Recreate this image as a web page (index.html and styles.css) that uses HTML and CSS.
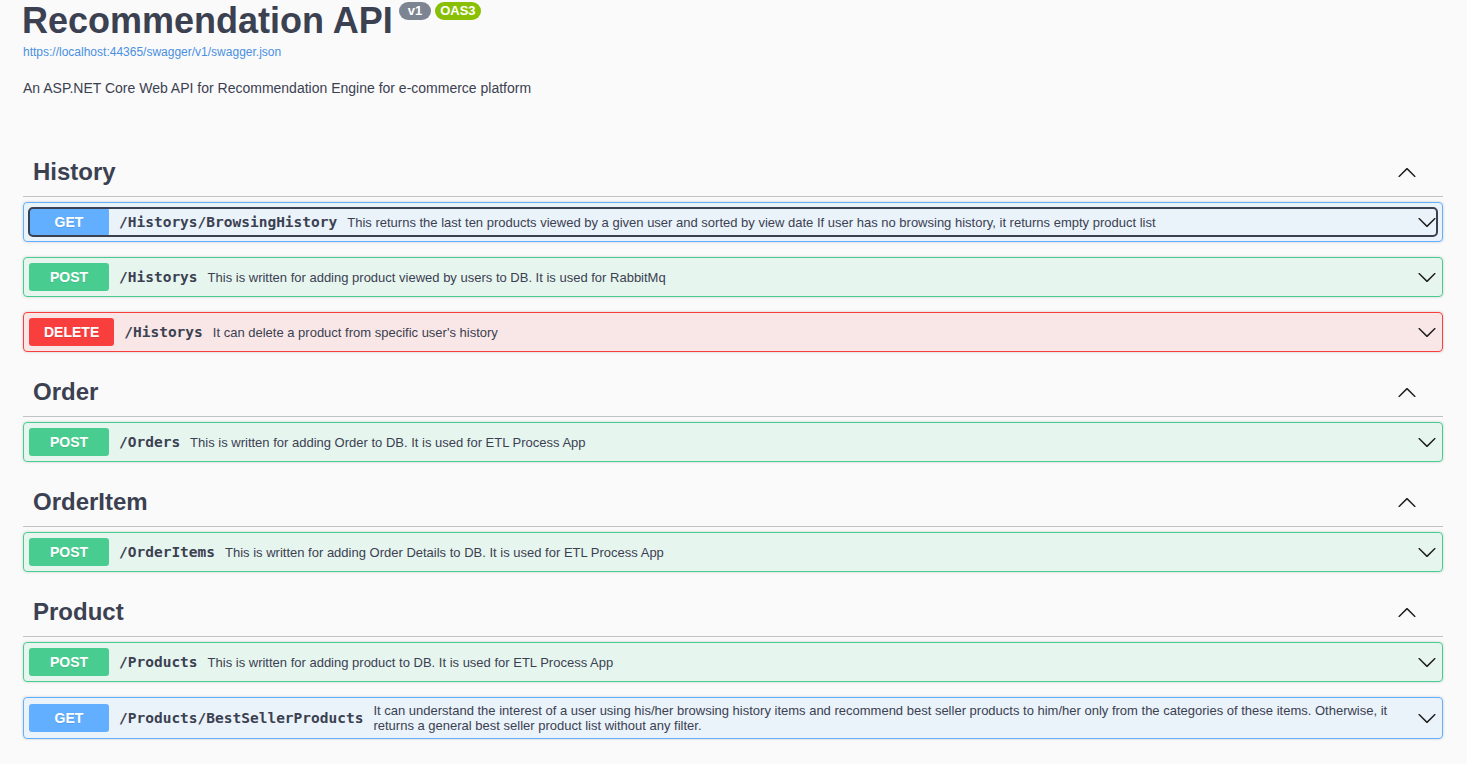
FILE: index.html
```html
<!DOCTYPE html>
<html lang="en">
<head>
<meta charset="utf-8">
<title>Swagger UI</title>
<link rel="stylesheet" href="styles.css">
</head>
<body>
<div class="wrapper">
  <div class="info">
    <h2 class="title">Recommendation API<span class="badge badge-version">v1</span><span class="badge badge-oas">OAS3</span></h2>
    <a class="spec-link" href="#">https://localhost:44365/swagger/v1/swagger.json</a>
    <p class="description">An ASP.NET Core Web API for Recommendation Engine for e-commerce platform</p>
  </div>

  <section class="tag-section">
    <h3 class="tag"><span class="tag-name">History</span><svg class="arrow" viewBox="0 0 20 20" width="20" height="20"><path d="M 17.418 14.908 C 17.69 15.176 18.127 15.176 18.397 14.908 C 18.667 14.64 18.668 14.207 18.397 13.939 L 10.489 6.109 C 10.219 5.841 9.782 5.841 9.51 6.109 L 1.602 13.939 C 1.332 14.207 1.332 14.64 1.602 14.908 C 1.873 15.176 2.311 15.176 2.581 14.908 L 10 7.767 L 17.418 14.908 Z"/></svg></h3>
    <div class="opblock opblock-get">
      <div class="summary">
        <div class="summary-inner focused">
          <span class="method">GET</span>
          <span class="path">/Historys/BrowsingHistory</span>
          <span class="desc">This returns the last ten products viewed by a given user and sorted by view date If user has no browsing history, it returns empty product list</span>
          <svg class="arrow op-arrow" viewBox="0 0 20 20" width="20" height="20"><path d="M 17.418 6.109 C 17.69 5.841 18.127 5.841 18.397 6.109 C 18.667 6.377 18.668 6.81 18.397 7.078 L 10.489 14.908 C 10.219 15.176 9.782 15.176 9.51 14.908 L 1.602 7.078 C 1.332 6.81 1.332 6.377 1.602 6.109 C 1.873 5.841 2.311 5.841 2.581 6.109 L 10 13.25 L 17.418 6.109 Z"/></svg>
        </div>
      </div>
    </div>
    <div class="opblock opblock-post">
      <div class="summary">
        <div class="summary-inner">
          <span class="method">POST</span>
          <span class="path">/Historys</span>
          <span class="desc">This is written for adding product viewed by users to DB. It is used for RabbitMq</span>
          <svg class="arrow op-arrow" viewBox="0 0 20 20" width="20" height="20"><path d="M 17.418 6.109 C 17.69 5.841 18.127 5.841 18.397 6.109 C 18.667 6.377 18.668 6.81 18.397 7.078 L 10.489 14.908 C 10.219 15.176 9.782 15.176 9.51 14.908 L 1.602 7.078 C 1.332 6.81 1.332 6.377 1.602 6.109 C 1.873 5.841 2.311 5.841 2.581 6.109 L 10 13.25 L 17.418 6.109 Z"/></svg>
        </div>
      </div>
    </div>
    <div class="opblock opblock-delete">
      <div class="summary">
        <div class="summary-inner">
          <span class="method">DELETE</span>
          <span class="path">/Historys</span>
          <span class="desc">It can delete a product from specific user's history</span>
          <svg class="arrow op-arrow" viewBox="0 0 20 20" width="20" height="20"><path d="M 17.418 6.109 C 17.69 5.841 18.127 5.841 18.397 6.109 C 18.667 6.377 18.668 6.81 18.397 7.078 L 10.489 14.908 C 10.219 15.176 9.782 15.176 9.51 14.908 L 1.602 7.078 C 1.332 6.81 1.332 6.377 1.602 6.109 C 1.873 5.841 2.311 5.841 2.581 6.109 L 10 13.25 L 17.418 6.109 Z"/></svg>
        </div>
      </div>
    </div>
  </section>

  <section class="tag-section">
    <h3 class="tag"><span class="tag-name">Order</span><svg class="arrow" viewBox="0 0 20 20" width="20" height="20"><path d="M 17.418 14.908 C 17.69 15.176 18.127 15.176 18.397 14.908 C 18.667 14.64 18.668 14.207 18.397 13.939 L 10.489 6.109 C 10.219 5.841 9.782 5.841 9.51 6.109 L 1.602 13.939 C 1.332 14.207 1.332 14.64 1.602 14.908 C 1.873 15.176 2.311 15.176 2.581 14.908 L 10 7.767 L 17.418 14.908 Z"/></svg></h3>
    <div class="opblock opblock-post">
      <div class="summary">
        <div class="summary-inner">
          <span class="method">POST</span>
          <span class="path">/Orders</span>
          <span class="desc">This is written for adding Order to DB. It is used for ETL Process App</span>
          <svg class="arrow op-arrow" viewBox="0 0 20 20" width="20" height="20"><path d="M 17.418 6.109 C 17.69 5.841 18.127 5.841 18.397 6.109 C 18.667 6.377 18.668 6.81 18.397 7.078 L 10.489 14.908 C 10.219 15.176 9.782 15.176 9.51 14.908 L 1.602 7.078 C 1.332 6.81 1.332 6.377 1.602 6.109 C 1.873 5.841 2.311 5.841 2.581 6.109 L 10 13.25 L 17.418 6.109 Z"/></svg>
        </div>
      </div>
    </div>
  </section>

  <section class="tag-section">
    <h3 class="tag"><span class="tag-name">OrderItem</span><svg class="arrow" viewBox="0 0 20 20" width="20" height="20"><path d="M 17.418 14.908 C 17.69 15.176 18.127 15.176 18.397 14.908 C 18.667 14.64 18.668 14.207 18.397 13.939 L 10.489 6.109 C 10.219 5.841 9.782 5.841 9.51 6.109 L 1.602 13.939 C 1.332 14.207 1.332 14.64 1.602 14.908 C 1.873 15.176 2.311 15.176 2.581 14.908 L 10 7.767 L 17.418 14.908 Z"/></svg></h3>
    <div class="opblock opblock-post">
      <div class="summary">
        <div class="summary-inner">
          <span class="method">POST</span>
          <span class="path">/OrderItems</span>
          <span class="desc">This is written for adding Order Details to DB. It is used for ETL Process App</span>
          <svg class="arrow op-arrow" viewBox="0 0 20 20" width="20" height="20"><path d="M 17.418 6.109 C 17.69 5.841 18.127 5.841 18.397 6.109 C 18.667 6.377 18.668 6.81 18.397 7.078 L 10.489 14.908 C 10.219 15.176 9.782 15.176 9.51 14.908 L 1.602 7.078 C 1.332 6.81 1.332 6.377 1.602 6.109 C 1.873 5.841 2.311 5.841 2.581 6.109 L 10 13.25 L 17.418 6.109 Z"/></svg>
        </div>
      </div>
    </div>
  </section>

  <section class="tag-section">
    <h3 class="tag"><span class="tag-name">Product</span><svg class="arrow" viewBox="0 0 20 20" width="20" height="20"><path d="M 17.418 14.908 C 17.69 15.176 18.127 15.176 18.397 14.908 C 18.667 14.64 18.668 14.207 18.397 13.939 L 10.489 6.109 C 10.219 5.841 9.782 5.841 9.51 6.109 L 1.602 13.939 C 1.332 14.207 1.332 14.64 1.602 14.908 C 1.873 15.176 2.311 15.176 2.581 14.908 L 10 7.767 L 17.418 14.908 Z"/></svg></h3>
    <div class="opblock opblock-post">
      <div class="summary">
        <div class="summary-inner">
          <span class="method">POST</span>
          <span class="path">/Products</span>
          <span class="desc">This is written for adding product to DB. It is used for ETL Process App</span>
          <svg class="arrow op-arrow" viewBox="0 0 20 20" width="20" height="20"><path d="M 17.418 6.109 C 17.69 5.841 18.127 5.841 18.397 6.109 C 18.667 6.377 18.668 6.81 18.397 7.078 L 10.489 14.908 C 10.219 15.176 9.782 15.176 9.51 14.908 L 1.602 7.078 C 1.332 6.81 1.332 6.377 1.602 6.109 C 1.873 5.841 2.311 5.841 2.581 6.109 L 10 13.25 L 17.418 6.109 Z"/></svg>
        </div>
      </div>
    </div>
    <div class="opblock opblock-get">
      <div class="summary">
        <div class="summary-inner">
          <span class="method">GET</span>
          <span class="path">/Products/BestSellerProducts</span>
          <span class="desc">It can understand the interest of a user using his/her browsing history items and recommend best seller products to him/her only from the categories of these items. Otherwise, it returns a general best seller product list without any filter.</span>
          <svg class="arrow op-arrow" viewBox="0 0 20 20" width="20" height="20"><path d="M 17.418 6.109 C 17.69 5.841 18.127 5.841 18.397 6.109 C 18.667 6.377 18.668 6.81 18.397 7.078 L 10.489 14.908 C 10.219 15.176 9.782 15.176 9.51 14.908 L 1.602 7.078 C 1.332 6.81 1.332 6.377 1.602 6.109 C 1.873 5.841 2.311 5.841 2.581 6.109 L 10 13.25 L 17.418 6.109 Z"/></svg>
        </div>
      </div>
    </div>
  </section>
</div>
</body>
</html>
```

FILE: styles.css
```css
html, body {
  margin: 0;
  padding: 0;
  background: #fafafa;
}

body {
  font-family: "Liberation Sans", Arial, sans-serif;
  color: #3b4151;
  overflow: hidden;
}

.wrapper {
  max-width: 1460px;
  margin: 0 auto 0 3px;
  padding: 0 20px;
  box-sizing: border-box;
}

.info {
  margin: 0 0 51px;
}

.title {
  margin: 0 0 0 -1px;
  font-size: 36px;
  line-height: 41px;
  font-weight: 700;
  color: #3b4151;
}

.badge {
  display: inline-block;
  position: relative;
  top: -18px;
  height: 18px;
  padding: 0 9px;
  border-radius: 57px;
  font-size: 13px;
  line-height: 18px;
  font-weight: 700;
  color: #fff;
  vertical-align: baseline;
}

.badge-version {
  background: #7d8492;
  margin-left: 6px;
}

.badge-oas {
  background: #89bf04;
  margin-left: 4px;
  padding: 0 5px;
}

.spec-link {
  display: block;
  margin-top: 4px;
  font-size: 12px;
  line-height: 14px;
  color: #4990e2;
  text-decoration: none;
}

.description {
  margin: 21px 0 0;
  font-size: 14px;
  line-height: 16px;
  color: #3b4151;
}

.tag-section:nth-of-type(n+2) {
  margin-bottom: 1px;
}

.tag {
  display: flex;
  align-items: center;
  margin: 0 0 5px;
  padding: 10px 26px 10px 10px;
  border-bottom: 1px solid rgba(59, 65, 81, 0.3);
  font-size: 24px;
  line-height: 29px;
  font-weight: 700;
  color: #3b4151;
}

.tag-name {
  flex: 1;
}

.arrow {
  display: block;
  flex: none;
  fill: #1e1e1e;
}

.opblock {
  margin: 0 0 15px;
  border: 1px solid #000;
  border-radius: 4px;
  box-shadow: 0 0 3px rgba(0, 0, 0, 0.19);
}

.opblock-get {
  background: rgba(97, 175, 254, 0.1);
  border-color: #61affe;
}

.opblock-get .method {
  background: #61affe;
}

.opblock-post {
  background: rgba(73, 204, 144, 0.1);
  border-color: #49cc90;
}

.opblock-post .method {
  background: #49cc90;
}

.opblock-delete {
  background: rgba(249, 62, 62, 0.1);
  border-color: #f93e3e;
}

.opblock-delete .method {
  background: #f93e3e;
}

.summary {
  padding: 5px;
}

.summary-inner {
  display: flex;
  align-items: center;
  border-radius: 4px;
}

.summary-inner.focused {
  outline: 2px solid #3b4151;
  outline-offset: -1px;
}

.method {
  flex: none;
  box-sizing: border-box;
  min-width: 80px;
  padding: 6px 15px;
  border-radius: 3px;
  font-size: 14px;
  line-height: 16px;
  font-weight: 700;
  color: #fff;
  text-align: center;
  text-shadow: 0 1px 0 rgba(0, 0, 0, 0.1);
}

.path {
  flex: none;
  padding: 0 10px;
  font-family: "DejaVu Sans Mono", "Liberation Mono", monospace;
  font-size: 14.5px;
  line-height: 18px;
  font-weight: 700;
  color: #3b4151;
}

.desc {
  flex: 1 1 auto;
  font-size: 13px;
  line-height: 15px;
  color: #3b4151;
}

.op-arrow {
  margin-left: 20px;
}
```
